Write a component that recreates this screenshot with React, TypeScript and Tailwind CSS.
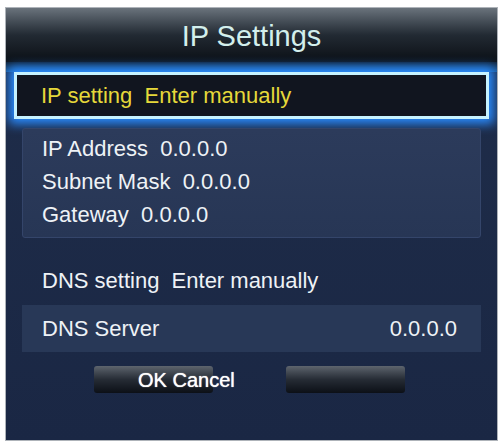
import React from "react";

export default function App() {
  const font = { fontFamily: '"Liberation Sans", Arial, sans-serif' };
  return (
    <div className="w-[504px] h-[443px] bg-white pt-[7px] pl-[5px]" style={font}>
      <div className="w-[493px] h-[434px] border border-[#aeb3b9] bg-gradient-to-b from-[#1f2d4a] to-[#1a2744] flex flex-col overflow-hidden">
        <div className="h-[54px] shrink-0 bg-gradient-to-b from-[#6a737c] via-[#222a33] to-[#0c1016] flex items-center justify-center">
          <span className="text-[29px] leading-none text-[#d3efec] mt-[2px]">IP Settings</span>
        </div>
        <div className="h-[10px] shrink-0 bg-gradient-to-b from-[#0f2034] to-[#1d5a96]" />
        <div className="mx-[8px] h-[47px] shrink-0 border-[3px] border-[#c6f2ff] bg-[#11151f] shadow-[0_0_10px_5px_#2a8cff] flex items-center pl-[24px]">
          <span className="text-[22px] text-[#e6d83a] whitespace-pre">IP setting  Enter manually</span>
        </div>
        <div className="mx-[16px] mt-[9px] h-[110px] shrink-0 rounded-[3px] bg-gradient-to-b from-[#2c3b5b] to-[#273655] border border-[#34456a] flex flex-col pl-[19px] pt-[3px] text-[#eef2f6] text-[22px]">
          <div className="h-[33px] flex items-center whitespace-pre">IP Address  0.0.0.0</div>
          <div className="h-[33px] flex items-center whitespace-pre">Subnet Mask  0.0.0.0</div>
          <div className="h-[33px] flex items-center whitespace-pre">Gateway  0.0.0.0</div>
        </div>
        <div className="h-[67px] shrink-0 flex items-end pb-[9px] pl-[36px] text-[22px] text-[#eef2f6] whitespace-pre">
          <span className="leading-[30px]">DNS setting  Enter manually</span>
        </div>
        <div className="mx-[16px] h-[47px] shrink-0 bg-[#283857] flex items-center justify-between pl-[20px] pr-[24px] text-[22px] text-[#eef2f6]">
          <span>DNS Server</span>
          <span>0.0.0.0</span>
        </div>
        <div className="mt-[14px] flex gap-[73px] pl-[88px]">
          <div className="relative w-[119px] h-[27px] rounded-[3px] bg-gradient-to-b from-[#5e656e] via-[#262c35] to-[#0c1017]">
            <span className="absolute left-[44px] top-[1px] text-[20px] leading-[26px] text-white whitespace-pre [text-shadow:0_0_1px_#ffffff]">OK Cancel</span>
          </div>
          <div className="w-[119px] h-[27px] rounded-[3px] bg-gradient-to-b from-[#5e656e] via-[#262c35] to-[#0c1017]" />
        </div>
      </div>
    </div>
  );
}
